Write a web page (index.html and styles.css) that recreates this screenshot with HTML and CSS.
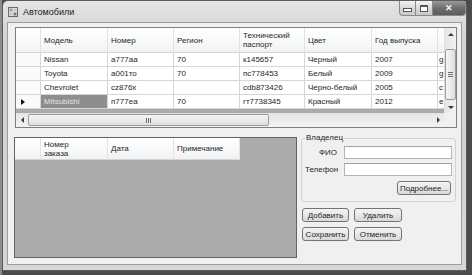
FILE: index.html
```html
<!DOCTYPE html>
<html lang="ru">
<head>
  <meta charset="UTF-8" />
  <title>Автомобили</title>
  <link rel="stylesheet" href="styles.css">
</head>
<body>
  <div class="window">
    <!-- Title bar -->
    <div class="titlebar">
      <svg class="app-icon" width="10" height="10" viewBox="0 0 10 10">
        <rect x="0.5" y="0.5" width="9" height="9" fill="#e8e8e8" stroke="#6a6a6a"/>
        <rect x="1.5" y="1.5" width="3" height="3" fill="#9a9a9a"/>
        <rect x="5.5" y="1.5" width="3" height="3" fill="#c4c4c4"/>
        <rect x="1.5" y="5.5" width="3" height="3" fill="#c4c4c4"/>
        <rect x="5.5" y="5.5" width="3" height="3" fill="#7c7c7c"/>
      </svg>
      <span class="title">Автомобили</span>
      <div class="caption-buttons">
        <span class="cb cb-min"><i></i></span>
        <span class="cb cb-max"><i></i></span>
        <span class="cb cb-close">✕</span>
      </div>
    </div>

    <div class="client">
      <!-- Cars grid -->
      <div class="datagrid cars">
        <div class="grid-body">
          <div class="row head">
            <div class="cell rh"></div>
            <div class="cell c67">Модель</div>
            <div class="cell c66">Номер</div>
            <div class="cell c66">Регион</div>
            <div class="cell c65">Технический<br>паспорт</div>
            <div class="cell c67">Цвет</div>
            <div class="cell c66">Год выпуска</div>
            <div class="cell cx"></div>
          </div>
          <div class="row">
            <div class="cell rh"></div>
            <div class="cell c67">Nissan</div>
            <div class="cell c66">а777аа</div>
            <div class="cell c66">70</div>
            <div class="cell c65">к145657</div>
            <div class="cell c67">Черный</div>
            <div class="cell c66">2007</div>
            <div class="cell cx">g</div>
          </div>
          <div class="row">
            <div class="cell rh"></div>
            <div class="cell c67">Toyota</div>
            <div class="cell c66">а001то</div>
            <div class="cell c66">70</div>
            <div class="cell c65">пс778453</div>
            <div class="cell c67">Белый</div>
            <div class="cell c66">2009</div>
            <div class="cell cx">g</div>
          </div>
          <div class="row">
            <div class="cell rh"></div>
            <div class="cell c67">Chevrolet</div>
            <div class="cell c66">cz876x</div>
            <div class="cell c66"></div>
            <div class="cell c65">cdb873426</div>
            <div class="cell c67">Черно-белый</div>
            <div class="cell c66">2005</div>
            <div class="cell cx">c</div>
          </div>
          <div class="row">
            <div class="cell rh current"></div>
            <div class="cell c67 selected">Mitsubishi</div>
            <div class="cell c66">п777еа</div>
            <div class="cell c66">70</div>
            <div class="cell c65">гт7738345</div>
            <div class="cell c67">Красный</div>
            <div class="cell c66">2012</div>
            <div class="cell cx">e</div>
          </div>
        </div>
        <div class="vscroll">
          <span class="arrow up"></span>
          <span class="thumb"><i></i></span>
          <span class="arrow down"></span>
        </div>
        <div class="hscroll">
          <span class="arrow left"></span>
          <span class="thumb"><i></i></span>
          <span class="arrow right"></span>
        </div>
        <div class="corner"></div>
      </div>

      <!-- Orders grid -->
      <div class="datagrid orders">
        <div class="row head">
          <div class="cell rh"></div>
          <div class="cell c67">Номер<br>заказа</div>
          <div class="cell c66">Дата</div>
          <div class="cell c66">Примечание</div>
        </div>
      </div>

      <!-- Owner panel and actions -->
      <div class="side">
        <fieldset class="owner">
          <legend>Владелец</legend>
          <label class="lbl">ФИО</label>
          <div class="textbox"></div>
          <label class="lbl">Телефон</label>
          <div class="textbox"></div>
          <button class="btn more">Подробнее...</button>
        </fieldset>
        <div class="actions">
          <button class="btn">Добавить</button>
          <button class="btn">Удалить</button>
          <button class="btn">Сохранить</button>
          <button class="btn">Отменить</button>
        </div>
      </div>
    </div>
  </div>
</body>
</html>
```

FILE: styles.css
```css
/* Desktop behind the window */
body {
  margin: 0;
  width: 472px;
  height: 275px;
  overflow: hidden;
  background: linear-gradient(to right, #8c8c8c 0 2px, #4b4b4b 2px);
  font-family: "Liberation Sans", Arial, sans-serif;
  font-size: 8px;
  color: #262626;
}

/* Window frame */
.window {
  box-sizing: border-box;
  margin-left: 2px;
  width: 465px;
  height: 271px;
  border: 1px solid #5c5c5c;
  border-radius: 6px 6px 0 0;
  background: linear-gradient(#e4e4e4, #d2d2d2 40px, #d6d6d6);
  padding: 0 4px 5px 4px;
  display: flex;
  flex-direction: column;
}

.titlebar {
  height: 21px;
  margin: 0 -4px;
  padding-left: 5px;
  display: flex;
  align-items: center;
}

.app-icon {
  flex: none;
  margin-top: 1px;
}

.title {
  margin-left: 5px;
  font-size: 9px;
  color: #222;
}

.caption-buttons {
  margin-left: auto;
  align-self: flex-start;
  display: flex;
  height: 15px;
}

.cb {
  box-sizing: border-box;
  height: 15px;
  border: 1px solid #8a8a8a;
  border-top: none;
  background: linear-gradient(#f4f4f4, #d8d8d8 50%, #cacaca);
  display: flex;
  align-items: center;
  justify-content: center;
}

.cb-min {
  width: 17px;
  border-radius: 0 0 0 4px;
}

.cb-min i {
  width: 7px;
  height: 2px;
  margin-top: 4px;
  border: 1px solid #555;
  background: #fff;
}

.cb-max {
  width: 17px;
  border-left: none;
}

.cb-max i {
  width: 6px;
  height: 4px;
  border: 1px solid #555;
  border-top-width: 2px;
  background: #fff;
}

.cb-close {
  width: 33px;
  border-left: none;
  border-radius: 0 0 4px 0;
  background: linear-gradient(#9a9a9a, #6e6e6e 50%, #5c5c5c);
  color: #f4f4f4;
  font-size: 9px;
  font-weight: bold;
}

/* Client area */
.client {
  flex: 1;
  border: 1px solid #9c9c9c;
  background: #f0f0f0;
  padding: 4px 0 0 6px;
  display: grid;
  grid-template-columns: 283px 155px;
  grid-template-rows: 101px 121px;
  column-gap: 4px;
  row-gap: 9px;
  align-content: start;
}

/* Data grids */
.datagrid {
  box-sizing: border-box;
  border: 1px solid #7e7e7e;
  background: #ababab;
}

.cars {
  grid-column: 1 / 3;
  margin-left: 1px;
  width: 442px;
  display: grid;
  grid-template-columns: 428px 12px;
  grid-template-rows: 85px 14px;
}

.orders {
  border-color: #646464;
}

.row {
  display: flex;
  height: 14px;
}

.row.head {
  height: 25px;
  background: linear-gradient(#ffffff, #f7f8f9 60%, #eef0f2);
}

.orders .row.head {
  width: 225px;
  height: 22px;
}

.cell {
  box-sizing: border-box;
  flex: none;
  padding: 0 3px;
  border-right: 1px solid #d6d6d6;
  border-bottom: 1px solid #d6d6d6;
  background: #fff;
  display: flex;
  align-items: center;
  white-space: nowrap;
  overflow: hidden;
  line-height: 9px;
}

.head .cell {
  background: transparent;
  border-right-color: #e2e3e5;
  border-bottom-color: #d5d5d5;
}

.rh {
  width: 25px;
  background: #fafafa;
}

.orders .rh {
  width: 26px;
}

.c65 { width: 65px; }
.c66 { width: 66px; }
.c67 { width: 67px; }

.cx {
  width: 6px;
  padding: 0 0 0 1px;
  border-right: none;
}

.current::before {
  content: "";
  margin-left: 2px;
  border-left: 4px solid #111;
  border-top: 3px solid transparent;
  border-bottom: 3px solid transparent;
}

.selected {
  background: #8e8e8e;
  color: #e2e2e2;
}

/* Scroll bars */
.vscroll,
.hscroll {
  background: linear-gradient(to right, #e6e6e6, #f2f2f2);
  display: flex;
}

.vscroll {
  flex-direction: column;
  border-left: 1px solid #e0e0e0;
}

.hscroll {
  background: linear-gradient(#e6e6e6, #f2f2f2);
  border-top: 1px solid #e0e0e0;
}

.arrow {
  flex: none;
  width: 12px;
  height: 12px;
  display: flex;
  align-items: center;
  justify-content: center;
}

.arrow::before {
  content: "";
  border: 3px solid transparent;
}

.arrow.up::before {
  border-bottom: 3px solid #3a3a3a;
  border-top-width: 0;
}

.arrow.down {
  margin-top: auto;
}

.arrow.down::before {
  border-top: 3px solid #3a3a3a;
  border-bottom-width: 0;
}

.arrow.left::before {
  border-right: 3px solid #3a3a3a;
  border-left-width: 0;
}

.arrow.right {
  margin-left: auto;
}

.arrow.right::before {
  border-left: 3px solid #3a3a3a;
  border-right-width: 0;
}

.thumb {
  box-sizing: border-box;
  border: 1px solid #9b9b9b;
  border-radius: 2px;
  display: flex;
  align-items: center;
  justify-content: center;
}

.vscroll .thumb {
  width: 11px;
  height: 51px;
  margin-top: 9px;
  background: linear-gradient(to right, #f6f6f6, #dedede);
}

.vscroll .thumb i {
  width: 5px;
  height: 5px;
  background: repeating-linear-gradient(#6c6c6c 0 1px, #f0f0f0 1px 2px);
}

.hscroll .thumb {
  width: 241px;
  height: 12px;
  background: linear-gradient(#f6f6f6, #dedede);
}

.hscroll .thumb i {
  width: 5px;
  height: 5px;
  background: repeating-linear-gradient(to right, #6c6c6c 0 1px, #f0f0f0 1px 2px);
}

.corner {
  background: #f0f0f0;
}

/* Owner group and buttons */
.side {
  margin-top: -4px;
  display: flex;
  flex-direction: column;
  align-items: flex-start;
}

.owner {
  box-sizing: border-box;
  width: 155px;
  margin: 0;
  padding: 3px 3px 6px 3px;
  border: 1px solid #d2d2d2;
  border-radius: 3px;
  display: grid;
  grid-template-columns: 32px 108px;
  column-gap: 7px;
  row-gap: 4px;
}

.owner legend {
  margin-left: 0;
  padding: 0 1px;
  line-height: 10px;
}

.lbl {
  text-align: right;
  align-self: center;
  white-space: nowrap;
}

.textbox {
  box-sizing: border-box;
  height: 13px;
  background: #fff;
  border: 1px solid #b4b4b4;
  border-top-color: #a2a2a2;
}

.btn {
  box-sizing: border-box;
  height: 14px;
  padding: 0;
  border: 1px solid #737373;
  border-radius: 3px;
  background: linear-gradient(#f4f4f4, #e8e8e8 50%, #d8d8d8);
  font-family: "Liberation Sans", Arial, sans-serif;
  font-size: 8px;
  color: #262626;
}

.more {
  grid-column: 2;
  justify-self: end;
  width: 54px;
  margin-top: 1px;
  margin-right: 1px;
}

.actions {
  margin-top: 6px;
  margin-left: 1px;
  display: grid;
  grid-template-columns: 47px 48px;
  gap: 5px;
}
```
